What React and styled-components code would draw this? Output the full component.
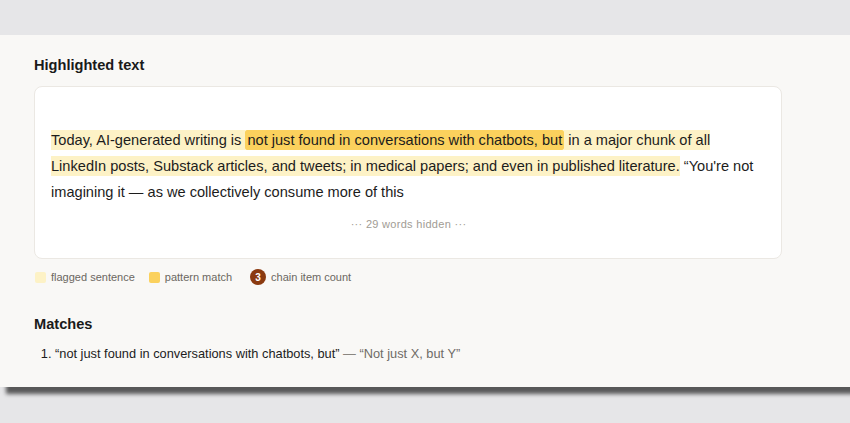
import React from 'react';
import styled, { createGlobalStyle } from 'styled-components';

const GlobalStyle = createGlobalStyle`
  html, body {
    margin: 0;
    padding: 0;
    background: #e6e6e8;
    font-family: "Liberation Sans", Arial, Helvetica, sans-serif;
  }
  #root {
    min-height: 423px;
  }
`;

const Page = styled.div`
  padding-top: 35px;
  overflow: hidden;
  min-height: 423px;
  box-sizing: border-box;
`;

const Panel = styled.section`
  background: #f9f8f6;
  padding: 20px 34px 23px;
  box-shadow: 6px 7px 4px rgba(0, 0, 0, 0.62);
  margin-right: -20px;
`;

const Heading = styled.h2`
  margin: 0;
  font-size: 14.6px;
  line-height: 20px;
  font-weight: 700;
  color: #1a1a1a;
  margin-top: ${p => p.gap || 0}px;
`;

const Card = styled.div`
  margin-top: 11px;
  width: 748px;
  box-sizing: border-box;
  background: #ffffff;
  border: 1px solid #ebe8e3;
  border-radius: 8px;
  padding: 40px 15px 27px 16px;
`;

const Para = styled.p`
  margin: 0;
  font-size: 14.6px;
  line-height: 26px;
  color: #1c1c1c;
`;

const Flagged = styled.span`
  background: #fdf2c6;
  padding: 2px 0;
  box-decoration-break: clone;
  -webkit-box-decoration-break: clone;
`;

const Match = styled.span`
  background: #fbd15d;
  padding: 2px 2px;
  border-radius: 2px;
`;

const Hidden = styled.div`
  margin-top: 12px;
  text-align: center;
  font-size: 11px;
  line-height: 14px;
  letter-spacing: 0.3px;
  color: #a19c94;
`;

const Legend = styled.div`
  display: flex;
  align-items: center;
  gap: 14px;
  margin-top: 10px;
  padding-left: 1px;
  height: 16px;
  font-size: 11px;
  color: #6b6761;
`;

const LegendItem = styled.div`
  display: flex;
  align-items: center;
  gap: 5px;
  margin-right: ${p => p.extra || 0}px;
`;

const Swatch = styled.span`
  width: 11px;
  height: 11px;
  border-radius: 2px;
  background: ${p => p.color};
`;

const Badge = styled.span`
  width: 16px;
  height: 16px;
  border-radius: 50%;
  background: #8b3a10;
  color: #fff;
  font-size: 10px;
  font-weight: 700;
  display: flex;
  align-items: center;
  justify-content: center;
`;

const MatchList = styled.ol`
  margin: 10px 0 0;
  padding-left: 21px;
  font-size: 12.8px;
  line-height: 20px;
  color: #1c1c1c;
`;

const Dash = styled.span`
  color: #8a8680;
`;

const Pattern = styled.span`
  color: #6f6b66;
`;

export default function App() {
  return (
    <>
      <GlobalStyle />
      <Page>
        <Panel>
          <Heading>Highlighted text</Heading>
          <Card>
            <Para>
              <Flagged>Today, AI-generated writing is </Flagged>
              <Match>not just found in conversations with chatbots, but</Match>
              <Flagged> in a major chunk of all LinkedIn posts, Substack articles, and tweets; in medical papers; and even in published literature.</Flagged>
              {' '}“You're not imagining it — as we collectively consume more of this
            </Para>
            <Hidden>··· 29 words hidden ···</Hidden>
          </Card>
          <Legend>
            <LegendItem>
              <Swatch color="#fdf2c6" />
              flagged sentence
            </LegendItem>
            <LegendItem extra={4}>
              <Swatch color="#fbd15d" />
              pattern match
            </LegendItem>
            <LegendItem>
              <Badge>3</Badge>
              chain item count
            </LegendItem>
          </Legend>
          <Heading gap={29}>Matches</Heading>
          <MatchList>
            <li>
              “not just found in conversations with chatbots, but” <Dash>—</Dash>{' '}
              <Pattern>“Not just X, but Y”</Pattern>
            </li>
          </MatchList>
        </Panel>
      </Page>
    </>
  );
}
